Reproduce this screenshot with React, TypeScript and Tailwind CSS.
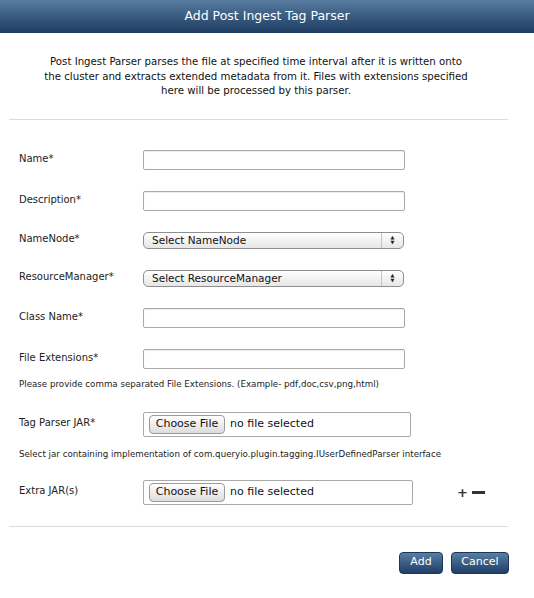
import React from 'react';

const font = { fontFamily: '"DejaVu Sans", "Liberation Sans", sans-serif' };

function TextField() {
  return <div className="h-[20px] w-[262px] rounded-[2px] border border-[#a9a9a9] bg-white shadow-[inset_0_1px_1px_rgba(0,0,0,0.08)]" />;
}

function SelectBox({ label }: { label: string }) {
  return (
    <div className="flex h-[17px] w-[261px] items-center rounded-[5px] border border-[#8e8e8e] bg-gradient-to-b from-white to-[#e6e6e6]">
      <span className="flex-1 pl-[8px] text-[10.5px] leading-none text-[#111]">{label}</span>
      <span className="flex h-full w-[22px] flex-col items-center justify-center border-l border-[#c4c4c4] text-[5px] leading-[5px] text-[#222]">
        <span>▲</span>
        <span>▼</span>
      </span>
    </div>
  );
}

function FileBox({ width }: { width: string }) {
  return (
    <div className={`flex h-[25px] ${width} items-center rounded-[2px] border border-[#a9a9a9] bg-white pl-[5px]`}>
      <span className="flex h-[19px] w-[76px] items-center justify-center rounded-[4px] border border-[#9a9a9a] bg-gradient-to-b from-white to-[#dcdcdc] text-[11px] text-[#111]">
        Choose File
      </span>
      <span className="pl-[5px] text-[11px] text-[#111]">no file selected</span>
    </div>
  );
}

function Row({ label, children, extra }: { label: string; children: React.ReactNode; extra?: React.ReactNode }) {
  return (
    <div className="flex items-center">
      <div className="-mt-[3px] w-[124px] text-[10px] text-[#222]">{label}</div>
      {children}
      {extra}
    </div>
  );
}

export default function App() {
  return (
    <div className="h-[598px] w-[534px] bg-white" style={font}>
      {/* Title bar */}
      <div className="flex h-[33px] items-center justify-center bg-gradient-to-b from-[#587ca0] to-[#1e3c62] text-[12.5px] text-white">
        Add Post Ingest Tag Parser
      </div>

      <p className="ml-[16px] mt-[22px] w-[480px] text-center text-[10.2px] leading-[14.5px] text-[#111]">
        Post Ingest Parser parses the file at specified time interval after it is written onto
        <br />
        the cluster and extracts extended metadata from it. Files with extensions specified
        <br />
        here will be processed by this parser.
      </p>

      <div className="mx-[9px] mt-[20px] h-px w-[499px] bg-[#dcdcdc]" />

      <div className="pl-[19px]">
        <div className="mt-[30px]">
          <Row label="Name*">
            <TextField />
          </Row>
        </div>
        <div className="mt-[21px]">
          <Row label="Description*">
            <TextField />
          </Row>
        </div>
        <div className="mt-[21px]">
          <Row label="NameNode*">
            <SelectBox label="Select NameNode" />
          </Row>
        </div>
        <div className="mt-[21px]">
          <Row label="ResourceManager*">
            <SelectBox label="Select ResourceManager" />
          </Row>
        </div>
        <div className="mt-[21px]">
          <Row label="Class Name*">
            <TextField />
          </Row>
        </div>
        <div className="mt-[21px]">
          <Row label="File Extensions*">
            <TextField />
          </Row>
        </div>
        <p className="mt-[9px] text-[8.7px] leading-[12px] text-[#222]">
          Please provide comma separated File Extensions. (Example- pdf,doc,csv,png,html)
        </p>
        <div className="mt-[22px]">
          <Row label="Tag Parser JAR*">
            <FileBox width="w-[268px]" />
          </Row>
        </div>
        <p className="mt-[11px] text-[8.7px] leading-[12px] text-[#222]">
          Select jar containing implementation of com.queryio.plugin.tagging.IUserDefinedParser interface
        </p>
        <div className="mt-[20px]">
          <Row
            label="Extra JAR(s)"
            extra={
              <div className="ml-[44px] flex items-center gap-[4px]">
                <span className="text-[13px] font-bold leading-none text-[#333]">+</span>
                <span className="h-[3px] w-[13px] bg-[#333]" />
              </div>
            }
          >
            <FileBox width="w-[270px]" />
          </Row>
        </div>
      </div>

      <div className="mx-[9px] mt-[21px] h-px w-[499px] bg-[#dcdcdc]" />

      <div className="mr-[25px] mt-[25px] flex justify-end gap-[8px]">
        <button className="h-[22px] w-[44px] rounded-[4px] border border-[#1a3658] bg-gradient-to-b from-[#5a7ea3] to-[#1f3f66] text-[11px] text-white">
          Add
        </button>
        <button className="h-[22px] w-[58px] rounded-[4px] border border-[#1a3658] bg-gradient-to-b from-[#5a7ea3] to-[#1f3f66] text-[11px] text-white">
          Cancel
        </button>
      </div>
    </div>
  );
}
